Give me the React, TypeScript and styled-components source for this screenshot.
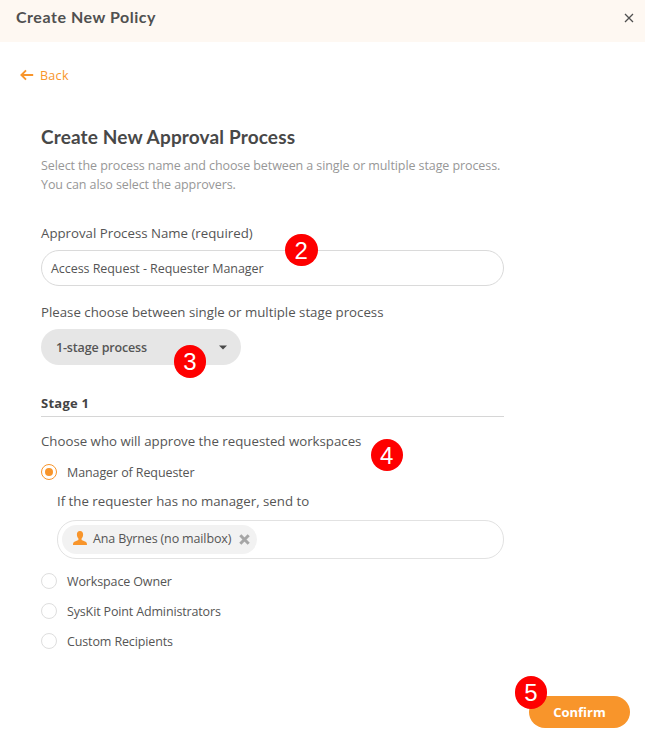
import React from "react";
import styled, { createGlobalStyle } from "styled-components";

const GlobalStyle = createGlobalStyle`
  * { box-sizing: border-box; }
  body {
    margin: 0;
    background: #fff;
    color: #555;
    font-family: "Open Sans", "Noto Sans", sans-serif;
    font-size: 13px;
  }
  button { font: inherit; color: inherit; }
`;

const Page = styled.div`
  width: 645px;
  height: 736px;
  display: flex;
  flex-direction: column;
  overflow: hidden;
`;

const Header = styled.header`
  flex: none;
  height: 42px;
  padding: 7px 10px 0 16px;
  display: flex;
  align-items: flex-start;
  justify-content: space-between;
  background: #fef8f2;
`;

const Title = styled.h1`
  margin: 0;
  font: 700 16px/20px Lato, sans-serif;
  letter-spacing: 0.53px;
  color: #505050;
`;

const CloseButton = styled.button`
  width: 12px;
  height: 12px;
  margin-top: 5px;
  padding: 0;
  border: 0;
  background: none;
  display: flex;
  align-items: center;
  justify-content: center;
`;

const BackLink = styled.a`
  height: 20px;
  margin: 23px 0 0 20px;
  display: flex;
  align-items: center;
  gap: 6px;
  color: #f8952b;
`;

const Form = styled.main`
  width: 463px;
  margin: 39px 0 0 41px;
  display: flex;
  flex-direction: column;
`;

const Heading = styled.h2`
  margin: 0 0 6px;
  font: 700 19px/26px Lato, sans-serif;
  letter-spacing: 0.15px;
  color: #484848;
`;

const Description = styled.p`
  margin: 0;
  font-size: 12.5px;
  line-height: 19px;
  letter-spacing: -0.09px;
  color: #979797;
`;

const Label = styled.div<{ $top: number }>`
  height: 20px;
  margin-top: ${(p) => p.$top}px;
  font-size: 13.25px;
  line-height: 20px;
  white-space: nowrap;
`;

const Text = styled.span<{ $spacing?: number }>`
  padding-top: 2px;
  font-size: 12.5px;
  line-height: 20px;
  letter-spacing: ${(p) => p.$spacing ?? 0}px;
  white-space: nowrap;
`;

const NameField = styled.div`
  position: relative;
  height: 36px;
  margin-top: 7px;
  padding: 0 9px;
  display: flex;
  align-items: center;
  border: 1px solid #dadada;
  border-radius: 18px;
`;

const StageSelect = styled.button`
  position: relative;
  width: 200px;
  height: 36px;
  margin-top: 7px;
  padding: 0 14px 0 15px;
  display: flex;
  align-items: center;
  justify-content: space-between;
  border: 0;
  border-radius: 18px;
  background: #e6e6e6;
  font-weight: 600;
`;

const StageTitle = styled.h3`
  height: 24px;
  margin: 28px 0 0;
  border-bottom: 1px solid #d6d6d6;
  font-size: 13px;
  font-weight: 700;
  line-height: 20px;
  letter-spacing: 0.25px;
  color: #444;
`;

const ApproverPrompt = styled.div`
  position: relative;
  margin-top: 14px;
`;

const Option = styled.label<{ $top: number }>`
  height: 20px;
  margin-top: ${(p) => p.$top}px;
  display: flex;
  align-items: center;
  gap: 10px;
`;

const Radio = styled.span<{ $checked?: boolean }>`
  width: 16px;
  height: 16px;
  display: flex;
  align-items: center;
  justify-content: center;
  border: 1px solid ${(p) => (p.$checked ? "#f8952b" : "#dedede")};
  border-radius: 50%;

  &::after {
    content: "";
    width: 8px;
    height: 8px;
    border-radius: 50%;
    background: ${(p) => (p.$checked ? "#f8952b" : "transparent")};
  }
`;

const Fallback = styled.div`
  margin-left: 16px;
`;

const PeopleField = styled.div`
  height: 39px;
  margin-top: 9px;
  padding: 0 4px;
  display: flex;
  align-items: center;
  border: 1px solid #e2e2e2;
  border-radius: 19px;
`;

const Chip = styled.span`
  width: 195px;
  height: 29px;
  padding: 0 7px 0 11px;
  display: flex;
  align-items: center;
  border-radius: 15px;
  background: #f2f2f2;

  ${Text} { margin: -4px auto 0 6px; }
`;

const PersonIcon = styled.svg`
  margin-top: -3px;
`;

const Footer = styled.footer`
  margin: auto 15px 8px auto;
`;

const ConfirmButton = styled.button`
  position: relative;
  display: block;
  width: 101px;
  height: 32px;
  padding: 0;
  border: 0;
  border-radius: 16px;
  background: #f8952b;
  color: #fff;
  font-size: 13px;
  font-weight: 700;
`;

const StepBadge = styled.span<{ $left: number; $top: number }>`
  position: absolute;
  left: ${(p) => p.$left}px;
  top: ${(p) => p.$top}px;
  width: 32.5px;
  height: 32.5px;
  border-radius: 50%;
  background: #fe0000;
  color: #fff;
  font: 400 24px/33px "Liberation Sans", Arial, sans-serif;
  letter-spacing: 0;
  text-align: center;
`;

const otherOptions = [
  { name: "Workspace Owner", top: 12, spacing: -0.13 },
  { name: "SysKit Point Administrators", top: 10, spacing: -0.15 },
  { name: "Custom Recipients", top: 10, spacing: -0.13 },
];

export default function App() {
  return (
    <Page>
      <GlobalStyle />
      <Header>
        <Title>Create New Policy</Title>
        <CloseButton aria-label="Close">
          <svg width="10" height="10" viewBox="0 0 10 10" fill="none" stroke="#505050" strokeWidth="1.3">
            <path d="M1 1l8 8M9 1L1 9" />
          </svg>
        </CloseButton>
      </Header>
      <BackLink>
        <svg width="14" height="12" viewBox="0 0 14 12" fill="none" stroke="currentColor" strokeWidth="1.9">
          <path d="M13.2 6H2M6 1.4L1.4 6L6 10.6" />
        </svg>
        <Text $spacing={0.3}>Back</Text>
      </BackLink>
      <Form>
        <Heading>Create New Approval Process</Heading>
        <Description>
          Select the process name and choose between a single or multiple stage process.
          <br />
          You can also select the approvers.
        </Description>

        <Label $top={29}>Approval Process Name (required)</Label>
        <NameField>
          <Text $spacing={-0.06}>Access Request - Requester Manager</Text>
          <StepBadge $left={243} $top={-17.5}>2</StepBadge>
        </NameField>

        <Label $top={16}>Please choose between single or multiple stage process</Label>
        <StageSelect>
          <Text $spacing={-0.15}>1-stage process</Text>
          <svg width="8" height="5" viewBox="0 0 8 5" fill="#484848">
            <path d="M0 0.5h8L4 4.5z" />
          </svg>
          <StepBadge $left={132.7} $top={16.4}>3</StepBadge>
        </StageSelect>

        <StageTitle>Stage 1</StageTitle>
        <ApproverPrompt>
          <Label $top={0}>Choose who will approve the requested workspaces</Label>
          <StepBadge $left={329.5} $top={7.5}>4</StepBadge>
        </ApproverPrompt>
        <Option $top={11}>
          <Radio $checked />
          <Text $spacing={-0.1}>Manager of Requester</Text>
        </Option>
        <Fallback>
          <Label $top={9}>If the requester has no manager, send to</Label>
          <PeopleField>
            <Chip>
              <PersonIcon width="14" height="14" viewBox="0 0 14 14" fill="#f8952b">
                <path d="M7 0C4.9 0 3.8 1.5 3.9 3.7C4 5.3 4.6 6.6 5.4 7.4V9L1.4 10.7C.5 11.1 0 12 0 14H14C14 12 13.5 11.1 12.6 10.7L8.6 9V7.4C9.4 6.6 10 5.3 10.1 3.7C10.2 1.5 9.1 0 7 0Z" />
              </PersonIcon>
              <Text $spacing={-0.14}>Ana Byrnes (no mailbox)</Text>
              <svg width="11" height="11" viewBox="0 0 11 11" fill="none" stroke="#a6a6a6" strokeWidth="3">
                <path d="M1.3 1.3l8.4 8.4M9.7 1.3L1.3 9.7" />
              </svg>
            </Chip>
          </PeopleField>
        </Fallback>
        {otherOptions.map((option) => (
          <Option key={option.name} $top={option.top}>
            <Radio />
            <Text $spacing={option.spacing}>{option.name}</Text>
          </Option>
        ))}
      </Form>
      <Footer>
        <ConfirmButton>
          Confirm
          <StepBadge $left={-14.4} $top={-19.6}>5</StepBadge>
        </ConfirmButton>
      </Footer>
    </Page>
  );
}
